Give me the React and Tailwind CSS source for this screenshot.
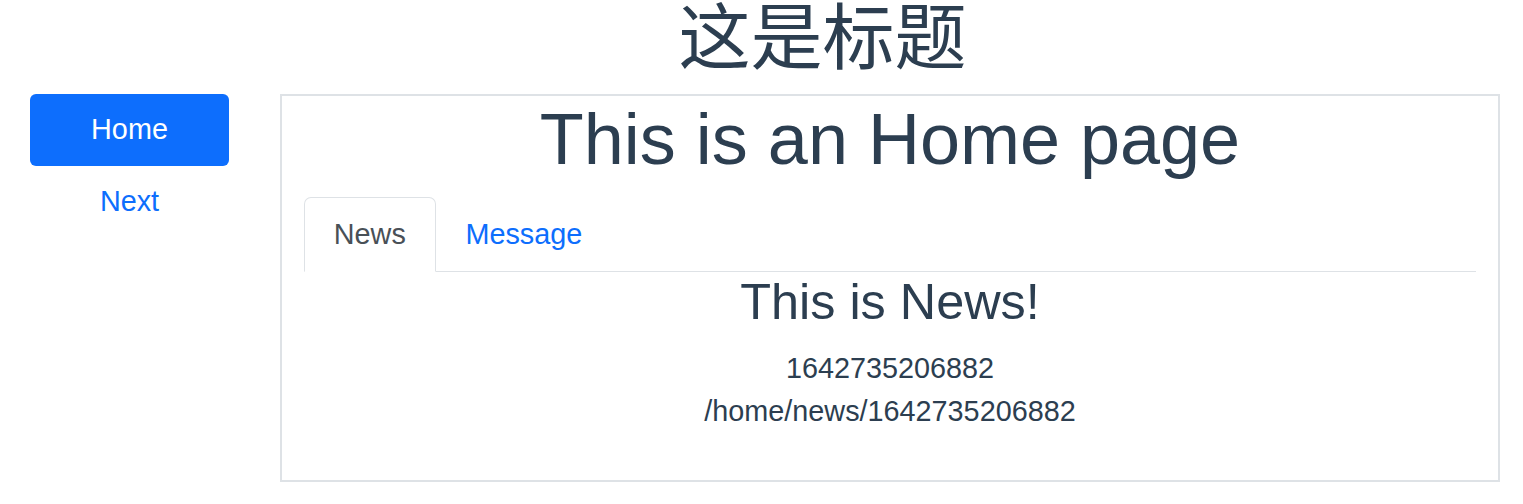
export default function App() {
  const font = { fontFamily: '"Liberation Sans", Arial, "Noto Sans CJK SC", sans-serif' };
  return (
    <div className="bg-white text-[#2c3e50] w-[1523px] h-[504px] overflow-hidden" style={font}>
      <div className="flow-root h-[94px] pl-[122px] text-center">
        <h1
          className="text-[72px] leading-[72px] mt-[-4px] font-normal"
          style={{ fontFamily: '"Noto Sans CJK SC", "Liberation Sans", sans-serif' }}
        >
          这是标题
        </h1>
      </div>
      <div className="flex items-start pl-[30px]">
        <nav className="w-[199px] flex flex-col text-[28.8px] leading-[43.2px] text-center">
          <a className="block py-[14.4px] rounded-[6px] bg-[#0d6efd] text-white">Home</a>
          <a className="block py-[14.4px] text-[#0d6efd]">Next</a>
        </nav>
        <div className="ml-[51px] w-[1220px] h-[388px] border-2 border-[#dee2e6] px-[22px] text-center">
          <h1 className="text-[72px] leading-[86.4px] font-normal mb-[14.4px]">This is an Home page</h1>
          <div className="flex border-b border-[#dee2e6] text-[28.8px] leading-[43.2px]">
            <a className="block px-[28.8px] pt-[15.4px] pb-[14.4px] -mb-px border border-[#dee2e6] border-b-white rounded-t-[7px] bg-white text-[#495057]">
              News
            </a>
            <a className="block px-[28.8px] pt-[15.4px] pb-[14.4px] -mb-px border border-transparent text-[#0d6efd]">
              Message
            </a>
          </div>
          <h3 className="text-[50.4px] leading-[60.5px] font-normal mb-[14.4px]">This is News!</h3>
          <div className="text-[28.8px] leading-[43.2px]">
            <div>1642735206882</div>
            <div>/home/news/1642735206882</div>
          </div>
        </div>
      </div>
    </div>
  );
}
